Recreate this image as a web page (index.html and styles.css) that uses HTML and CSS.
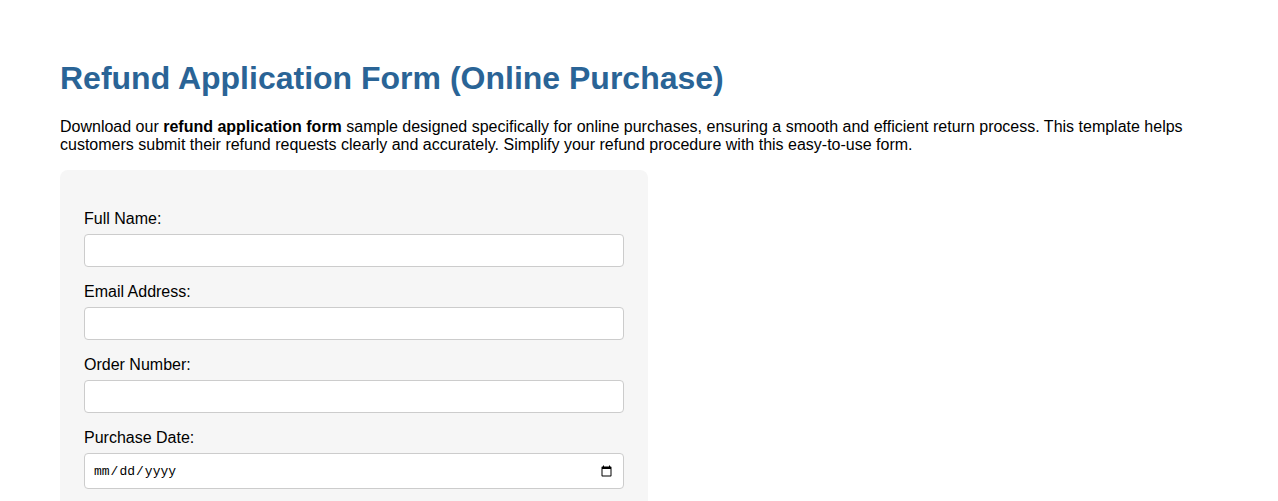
FILE: index.html
```html
<!DOCTYPE html>
<html>
<head>
<meta charset="utf-8">
<link rel="stylesheet" href="styles.css">
</head>
<body>
<div class="page">
  <h1 class="title">Refund Application Form (Online Purchase)</h1>
  <p class="intro">Download our <strong>refund application form</strong> sample designed specifically for online purchases, ensuring a smooth and efficient return process. This template helps customers submit their refund requests clearly and accurately. Simplify your refund procedure with this easy-to-use form.</p>
  <form class="form">
    <div class="field">
      <label class="label" for="name">Full Name:</label>
      <input class="input" id="name" type="text">
    </div>
    <div class="field">
      <label class="label" for="email">Email Address:</label>
      <input class="input" id="email" type="email">
    </div>
    <div class="field">
      <label class="label" for="order">Order Number:</label>
      <input class="input" id="order" type="text">
    </div>
    <div class="field">
      <label class="label" for="date">Purchase Date:</label>
      <input class="input date" id="date" type="date">
    </div>
  </form>
</div>
</body>
</html>
```
FILE: styles.css
```css
html, body {
  margin: 0;
  padding: 0;
  background: #ffffff;
}
body {
  font-family: "Liberation Sans", Arial, sans-serif;
  color: #000;
}
.page {
  padding: 40px 60px;
}
.title {
  font-size: 32px;
  font-weight: bold;
  color: #2a6496;
  margin: 20px 0 21px;
}
.intro {
  font-size: 16px;
  line-height: 18px;
  margin: 0 0 16px;
}
.form {
  width: 540px;
  background: #f6f6f6;
  border-radius: 8px;
  padding: 40px 24px 20px;
}
.field {
  display: flex;
  flex-direction: column;
  margin-bottom: 16px;
}
.label {
  font-size: 16px;
  line-height: 18px;
  margin-bottom: 6px;
}
.input {
  box-sizing: border-box;
  width: 100%;
  height: 33px;
  padding: 8px;
  border: 1px solid #cccccc;
  border-radius: 4px;
  background: #fff;
  font-family: "Liberation Sans", Arial, sans-serif;
  font-size: 14px;
}
.input.date {
  height: 36px;
  font-family: "Liberation Mono", "DejaVu Sans Mono", monospace;
  font-size: 13px;
}
```
